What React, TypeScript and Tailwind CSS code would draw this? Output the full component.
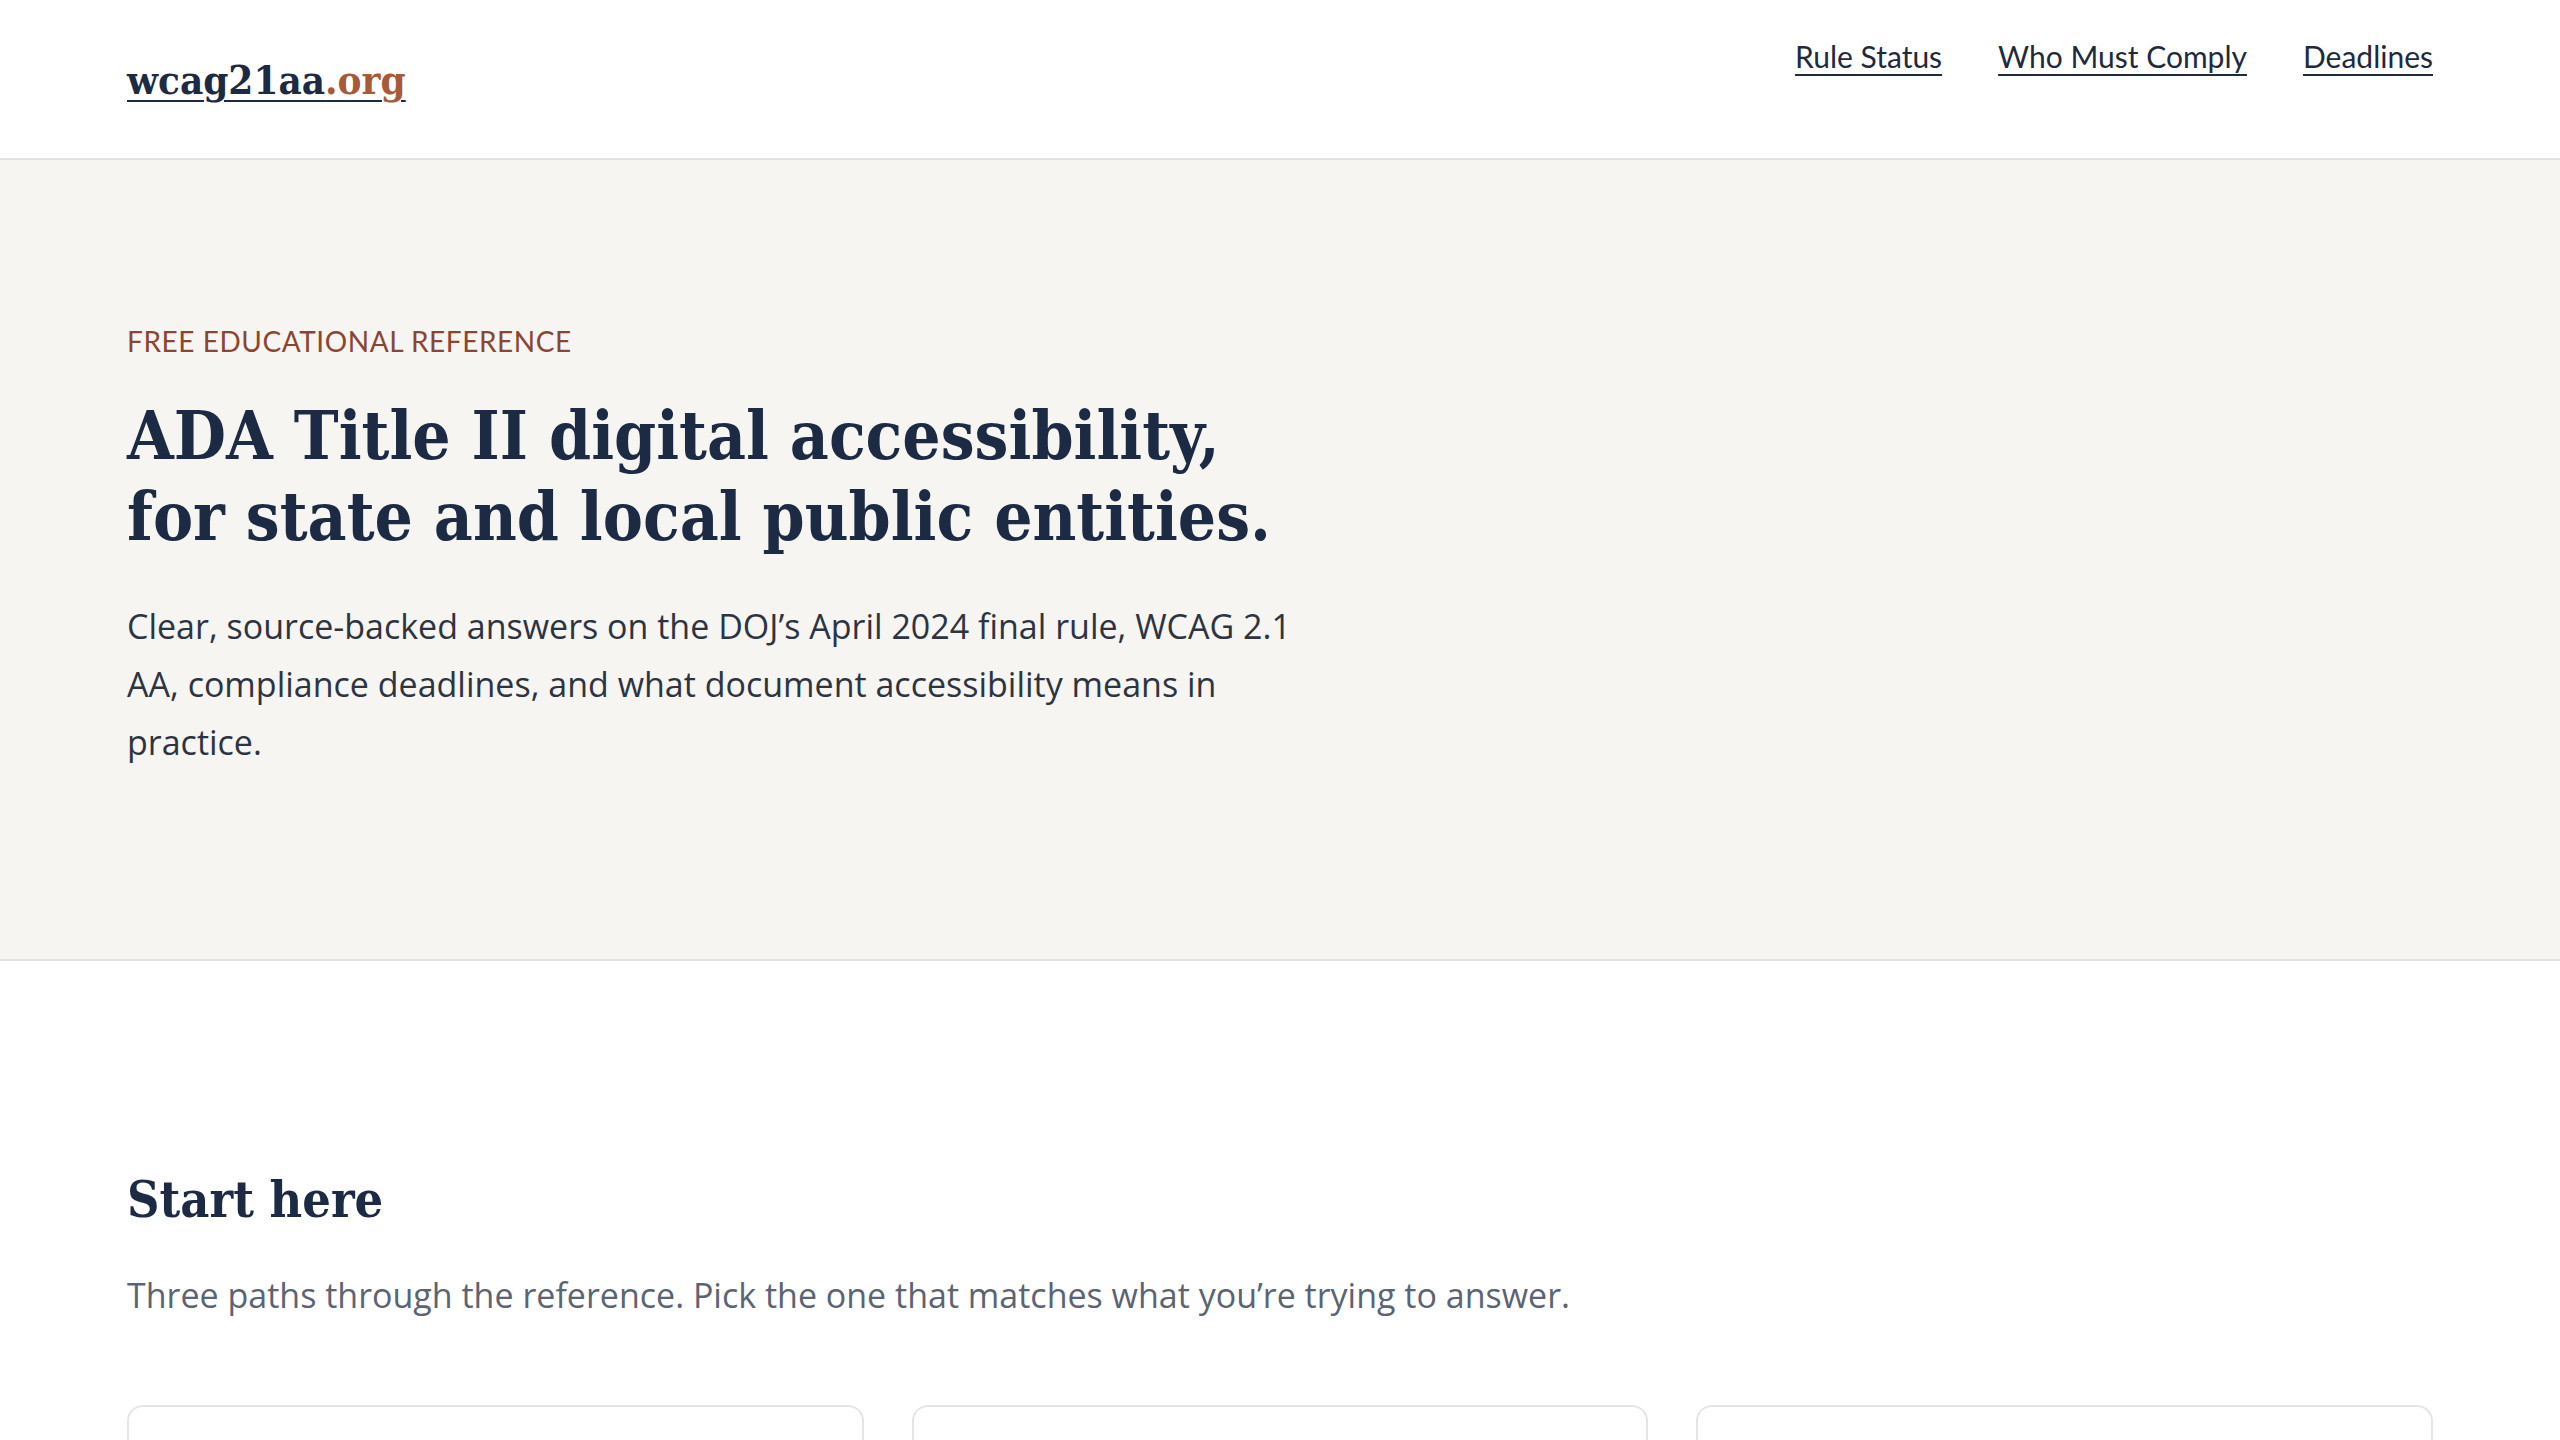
import React from 'react'

const navItems = [
  { name: 'Rule Status', href: '#rule-status' },
  { name: 'Who Must Comply', href: '#who-must-comply' },
  { name: 'Deadlines', href: '#deadlines' },
]

const serif = '"DejaVu Serif Condensed", "DejaVu Serif", "Liberation Serif", serif'
const sans = '"Open Sans", "Noto Sans", sans-serif'
const uiSans = 'Lato, "Open Sans", sans-serif'

export default function App() {
  return (
    <div className="min-h-screen bg-white text-[#2d3441]" style={{ fontFamily: sans }}>
      {/* Header */}
      <header className="border-b-2 border-[#e1e2e5] bg-white">
        <div className="mx-auto flex h-[158px] w-full max-w-[2306px] items-start justify-between">
          <a
            href="/"
            className="mt-[52px] font-stretch-condensed text-[40px] font-bold leading-[56px] text-[#1c2a44] underline decoration-2 underline-offset-[6px]"
            style={{ fontFamily: serif }}
          >
            wcag21aa<span className="text-[#a65a3a]">.org</span>
          </a>
          <nav className="mt-[34px] flex items-center gap-[56px]" style={{ fontFamily: uiSans }}>
            {navItems.map((item) => (
              <a
                key={item.name}
                href={item.href}
                className="text-[30px] leading-[45px] text-[#1e2a3d] underline decoration-2 underline-offset-[6px]"
              >
                {item.name}
              </a>
            ))}
          </nav>
        </div>
      </header>

      {/* Hero */}
      <section className="border-b-2 border-[#e1e2e5] bg-[#f6f5f2]">
        <div className="mx-auto w-full max-w-[2306px] pt-[160px] pb-[188px]">
          <p
            className="text-[28px] leading-[42px] uppercase tracking-[0.02em] text-[#8b4531]"
            style={{ fontFamily: uiSans }}
          >
            Free educational reference
          </p>
          <h1
            className="mt-[33px] font-stretch-condensed text-[67px] font-bold leading-[81px] text-[#1c2a44]"
            style={{ fontFamily: serif }}
          >
            ADA Title II digital accessibility,
            <br />
            for state and local public entities.
          </h1>
          <p className="mt-[40px] max-w-[1195px] text-[34px] leading-[58px] text-[#2d3441]">
            Clear, source-backed answers on the DOJ’s April 2024 final rule, WCAG 2.1 AA, compliance
            deadlines, and what document accessibility means in practice.
          </p>
        </div>
      </section>

      {/* Start here */}
      <section className="bg-white">
        <div className="mx-auto w-full max-w-[2306px] pt-[208px] pb-[120px]">
          <h2
            className="font-stretch-condensed text-[50px] font-bold leading-[62px] text-[#1c2a44]"
            style={{ fontFamily: serif }}
          >
            Start here
          </h2>
          <p className="mt-[38px] text-[34px] leading-[53px] text-[#5b6473]">
            Three paths through the reference. Pick the one that matches what you’re trying to answer.
          </p>
          <div className="mt-[83px] grid grid-cols-3 gap-[48px]">
            <div className="h-[360px] rounded-[16px] border-2 border-[#e3e5e8] bg-white" />
            <div className="h-[360px] rounded-[16px] border-2 border-[#e3e5e8] bg-white" />
            <div className="h-[360px] rounded-[16px] border-2 border-[#e3e5e8] bg-white" />
          </div>
        </div>
      </section>
    </div>
  )
}
